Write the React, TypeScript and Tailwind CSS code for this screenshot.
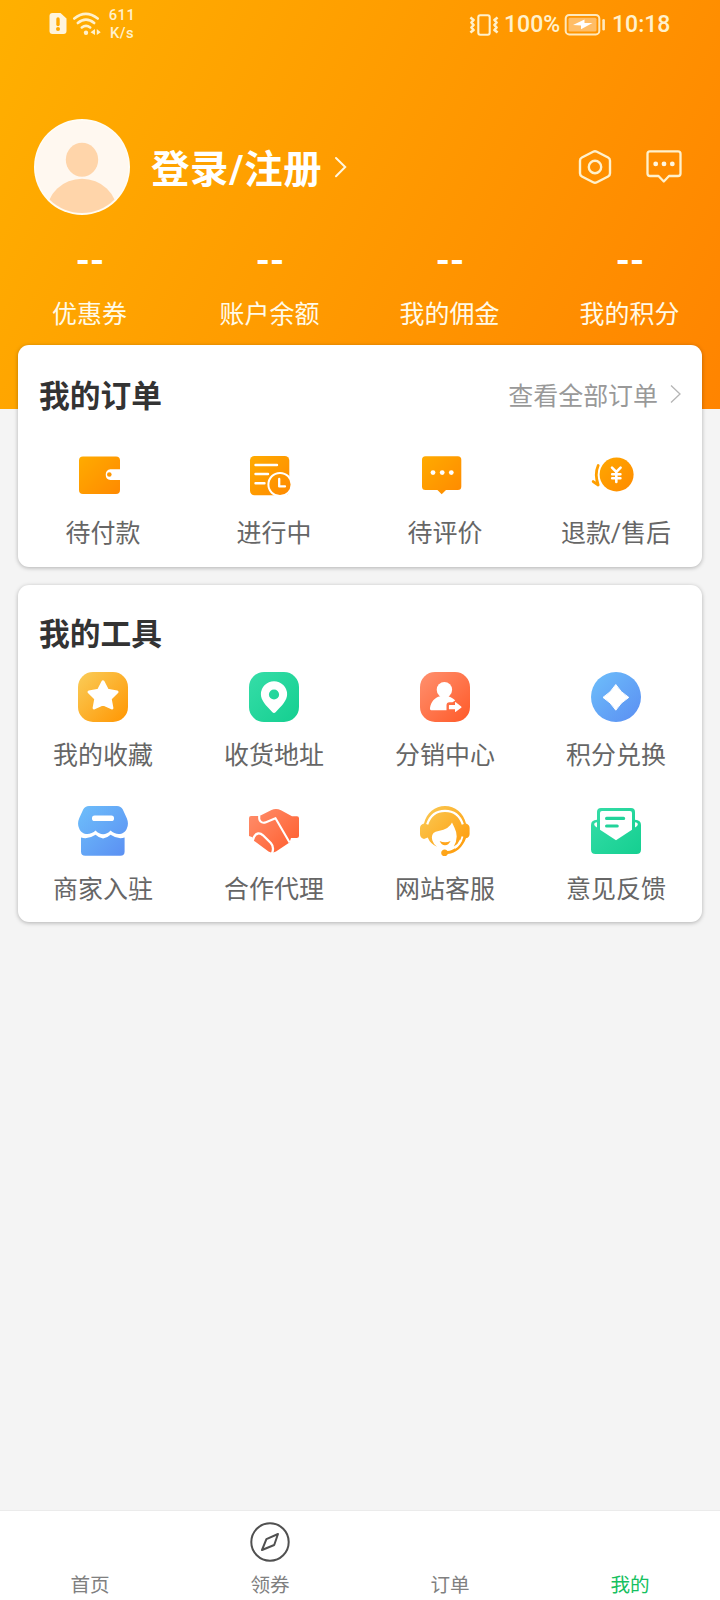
import type { ReactNode } from "react";

type Item = { label: string; icon: ReactNode };

const Grad = ({ id, from, to }: { id: string; from: string; to: string }) => (
  <linearGradient id={id} gradientUnits="userSpaceOnUse" x1="4" y1="4" x2="46" y2="46">
    <stop offset="0" stopColor={from} />
    <stop offset="1" stopColor={to} />
  </linearGradient>
);

const Icon = ({ children }: { children: ReactNode }) => (
  <svg className="ml-[60px] block h-[50px] w-[50px]" viewBox="0 0 50 50">
    {children}
  </svg>
);

const orders: Item[] = [
  {
    label: "待付款",
    icon: (
      <Icon>
        <path
          fill="url(#orange)"
          d="M5 6.5H38Q42 6.5 42 10.5V19.3H32.4A5.4 5.4 0 0 0 32.4 30H42V40Q42 44 38 44H5Q1 44 1 40V10.5Q1 6.5 5 6.5Z"
        />
        <circle cx="31.3" cy="24.5" r="2.3" fill="url(#orange)" />
      </Icon>
    ),
  },
  {
    label: "进行中",
    icon: (
      <Icon>
        <rect x="1" y="6" width="39.3" height="39.3" rx="4.5" fill="url(#orange)" />
        <path d="M6.5 15H28M6.5 24H19M6.5 33.2H15.5" stroke="#fff" strokeWidth="2.4" strokeLinecap="round" />
        <circle cx="31" cy="34.5" r="11.6" fill="url(#orange)" stroke="#fff" strokeWidth="2" />
        <path d="M30.2 29V36.4H36" fill="none" stroke="#fff" strokeWidth="2.3" strokeLinecap="round" strokeLinejoin="round" />
      </Icon>
    ),
  },
  {
    label: "待评价",
    icon: (
      <Icon>
        <path
          fill="url(#orange)"
          d="M5.5 6.3H37.8Q41.3 6.3 41.3 9.8V36.5Q41.3 40 37.8 40H26L21.7 44.3L17.4 40H5.5Q2 40 2 36.5V9.8Q2 6.3 5.5 6.3Z"
        />
        <g fill="#fff">
          <circle cx="13" cy="22.6" r="2.4" />
          <circle cx="22.2" cy="22.6" r="2.4" />
          <circle cx="31.3" cy="22.6" r="2.4" />
        </g>
      </Icon>
    ),
  },
  {
    label: "退款/售后",
    icon: (
      <Icon>
        <circle cx="25.6" cy="24.4" r="17" fill="url(#orange)" />
        <path d="M7.2 15.5Q3.4 24 7.2 35L2.2 31.6" fill="none" stroke="#ff9f00" strokeWidth="2.8" strokeLinecap="round" strokeLinejoin="round" />
        <path d="M21 17.6L25.3 22L29.6 17.6M25.3 22V32M21.2 24.2H29.4M21.2 28.3H29.4" fill="none" stroke="#fff" strokeWidth="2.6" strokeLinecap="round" />
      </Icon>
    ),
  },
];

const tools: Item[] = [
  {
    label: "我的收藏",
    icon: (
      <Icon>
        <rect width="50" height="50" rx="15" fill="url(#amber)" />
        <path
          fill="#fff"
          stroke="#fff"
          strokeWidth="3"
          strokeLinejoin="round"
          d="M25 9.8L29.4 18.2L39 20L32.2 26.7L33.9 36L25 32L16.1 36L17.8 26.7L11 20L20.6 18.2Z"
        />
      </Icon>
    ),
  },
  {
    label: "收货地址",
    icon: (
      <Icon>
        <rect width="50" height="50" rx="15" fill="url(#green)" />
        <path
          fill="#fff"
          fillRule="evenodd"
          d="M25 9.2A13.1 13.1 0 0 1 38.1 22.3C38.1 28.5 33 33.5 26.8 40Q25 42 23.2 40C17 33.5 11.9 28.5 11.9 22.3A13.1 13.1 0 0 1 25 9.2ZM25 17.4A5.1 5.1 0 1 0 25 27.6A5.1 5.1 0 1 0 25 17.4Z"
        />
      </Icon>
    ),
  },
  {
    label: "分销中心",
    icon: (
      <Icon>
        <rect width="50" height="50" rx="15" fill="url(#red)" />
        <g fill="#fff">
          <circle cx="24.4" cy="17.8" r="7.7" />
          <path d="M20.5 22H28.5L28.8 24.5C31.4 25.3 33.7 26.7 35.2 28.6L32.5 30.3H29.5Q26.5 30.3 26.5 33.3V38.3H12Q9.6 38.3 10 36C11 30 14.5 25.5 20.2 24.3Z" />
          <path d="M29.5 33H35V30.5Q35 29.8 35.8 30.3L41.2 34.4Q42 35.1 41.2 35.8L35.8 39.8Q35 40.3 35 39.5V37.3H29.5Q28.9 37.3 28.9 36.7V33.6Q28.9 33 29.5 33Z" />
        </g>
      </Icon>
    ),
  },
  {
    label: "积分兑换",
    icon: (
      <Icon>
        <circle cx="25" cy="25" r="25" fill="url(#blue)" />
        <path fill="#fff" stroke="#fff" strokeLinejoin="round" d="M24.8 12.5Q29.5 20.5 37.8 25.4Q29.5 30.3 24.8 38.2Q20 30.3 12 25.4Q20 20.5 24.8 12.5Z" />
      </Icon>
    ),
  },
  {
    label: "商家入驻",
    icon: (
      <Icon>
        <path
          fill="url(#blue)"
          d="M11 0H39Q43 0 44.8 3.5L48.8 12.2Q51 17.5 49 22C46.5 29.5 37.5 29.5 32.6 24.5C28 29.6 22.2 29.6 17.6 24.5C12.5 29.5 3.5 29.5 1 22Q-1 17.5 1.2 12.2L5.2 3.5Q7 0 11 0Z"
        />
        <path
          fill="url(#blue)"
          d="M3 31.6Q10.5 33.6 17.6 28.8Q25 36 32.6 28.8Q39.5 33.6 46.6 31.6V45.5Q46.6 49.8 42.3 49.8H7.3Q3 49.8 3 45.5Z"
        />
        <rect x="14" y="9.4" width="22" height="5.6" rx="2.6" fill="#fff" />
      </Icon>
    ),
  },
  {
    label: "合作代理",
    icon: (
      <Icon>
        <path
          fill="url(#red)"
          d="M2 10H10.5L22.5 4Q27 1.8 32 4.2L43 10.2H48Q50 10.2 50 12.2V29.5Q50 32 47.5 32H42L40.5 36.5L27 45.6Q23 47.7 19.5 45.5L4.5 34.5L3.5 31.2L0 30V12Q0 10 2 10Z"
        />
        <path
          d="M10.3 9.5C9.3 15 12.5 18 17 16.2L26.5 12.2L40.6 36.5"
          fill="none"
          stroke="#fff"
          strokeWidth="2.1"
          strokeLinejoin="round"
        />
        <path d="M3.5 35.5L5 31C7 26.6 11 26.6 14 29.3L21.8 37Q25.5 41 23 47.5" fill="none" stroke="#fff" strokeWidth="2.3" />
      </Icon>
    ),
  },
  {
    label: "网站客服",
    icon: (
      <Icon>
        <path
          fill="url(#amber)"
          d="M4 17.5C6.5 6.8 15 0 25 0S43.5 6.8 46 17.5Q49.6 18.5 49.6 22V28Q49.6 31.5 46 32.3C42.8 41 36 47.6 27.8 47.9A3.4 3.4 0 1 1 27.5 45.1C33.5 44.3 38.3 40.8 41.5 35L40 33.5Q38.2 38.2 33.8 40.6Q39.2 31 34.5 21.8L32 16.5Q29.4 23 18.5 25Q10 26.3 12.4 34.5Q13.3 38 17 40.7Q10.5 38.3 7.7 31.6L4 33Q0 32 0 28V22Q0 18.5 4 17.5Z"
        />
        <path d="M7.2 18.3C10 9.8 16.5 4.8 25 4.8S40 9.8 42.8 18.3" fill="none" stroke="#fff" strokeWidth="2.2" />
        <path d="M42.5 30.5Q40.5 38.5 34.8 42" fill="none" stroke="#fff" strokeWidth="1.8" />
        <path d="M19.6 35Q25 37.6 30.6 35Q28.5 39.2 25 39.2Q21.5 39.2 19.6 35Z" fill="#ffa51a" />
      </Icon>
    ),
  },
  {
    label: "意见反馈",
    icon: (
      <Icon>
        <path
          fill="url(#green)"
          d="M10 2H40Q44 2 44 6V13.8Q50 14.3 50 19V43.5Q50 48 45.5 48H4.5Q0 48 0 43.5V19Q0 14.3 6 13.8V6Q6 2 10 2Z"
        />
        <path fill="#fff" d="M11 5H39Q41 5 41 7V23.8L25 34.2L9 23.8V7Q9 5 11 5Z" />
        <path d="M6 16.3Q3.2 16.5 3.2 18.6Q3.2 20 6 21.4ZM44 16.3Q46.8 16.5 46.8 18.6Q46.8 20 44 21.4Z" fill="#fff" />
        <path d="M15.6 12.4H32.6M15.6 20H26.2" stroke="#22d39a" strokeWidth="3.2" strokeLinecap="round" />
      </Icon>
    ),
  },
];

const Cell = ({ item }: { item: Item }) => (
  <div className="flex w-[171px] flex-col">
    {item.icon}
    <div className="mt-4 h-[33px] pr-px text-center text-[24.96px] leading-9 text-[#666]">{item.label}</div>
  </div>
);

const StatusBar = () => (
  <div className="flex h-[50px] items-center text-[#fff1cc]">
    <svg className="ml-[49px] block h-[30px] w-[56px] shrink-0" viewBox="49 10 56 30">
      <path fill="#fff4dc" d="M52.5 13H60.5L66.5 18.6V31Q66.5 34 63.5 34H52.5Q49.5 34 49.5 31V16Q49.5 13 52.5 13Z" />
      <path d="M58 19V24.5" stroke="#ffa800" strokeWidth="3.4" strokeLinecap="round" />
      <circle cx="58" cy="29" r="2" fill="#ffa800" />
      <g fill="none" stroke="#fff1cc" strokeWidth="2.6" strokeLinecap="round">
        <path d="M74.3 18.5Q85.8 9.3 97.7 18.5" />
        <path d="M77.8 23Q86 16.2 94.2 23" />
        <path d="M81.8 27.5Q86 24.3 90.2 27.5" />
      </g>
      <circle cx="86" cy="32.7" r="2.2" fill="#fff1cc" />
      <path fill="#fff1cc" d="M95 29V35L90.5 32.2ZM96.8 29V35L100.7 32.2Z" />
    </svg>
    <div className="-mt-[2px] ml-[3px] w-[28px] text-center text-[14.8px] font-medium leading-[18px] tracking-[0.5px]">
      <div>611</div>
      <div>K/s</div>
    </div>
    <svg className="ml-[333px] block h-[26px] w-[30px] shrink-0" viewBox="469 11 30 26">
      <g fill="none" stroke="#fff1cc" strokeWidth="2.1" strokeLinejoin="round">
        <rect x="478.3" y="14.2" width="11.4" height="19.6" rx="2" />
        <path strokeWidth="2.6" d="M470.4 16.5L473.6 19L471.4 21.5L473.6 24L471.4 26.5L473.6 29L470.4 31.5" />
        <path strokeWidth="2.6" d="M497.6 16.5L494.4 19L496.6 21.5L494.4 24L496.6 26.5L494.4 29L497.6 31.5" />
      </g>
    </svg>
    <div className="ml-[5px] w-[60px] whitespace-nowrap text-[23px] font-medium leading-[50px]">100%</div>
    <svg className="block h-[24px] w-[42px] shrink-0" viewBox="564 13 42 24">
      <rect x="565.7" y="15" width="33.6" height="19.4" rx="3.5" fill="none" stroke="#ffe9bd" strokeWidth="2" />
      <rect x="568.5" y="17.8" width="28" height="13.8" rx="1.5" fill="#ffbd66" />
      <path d="M573 25L584.5 19.5V23H592.5L581 29.2V25.6Z" fill="#fff" />
      <path d="M603.6 20.2V29.2" stroke="#ffe9bd" strokeWidth="2.6" strokeLinecap="round" />
    </svg>
    <div className="ml-[6px] whitespace-nowrap text-[23px] font-medium leading-[50px]">10:18</div>
  </div>
);

const stats = ["优惠券", "账户余额", "我的佣金", "我的积分"];

export default function App() {
  return (
    <div className="flex h-[1600px] w-[720px] flex-col overflow-hidden bg-[#f4f4f4] font-[Roboto,'Noto_Sans_CJK_SC',sans-serif]">
      <svg className="absolute h-0 w-0">
        <defs>
          <Grad id="orange" from="#ffab00" to="#ff8700" />
          <Grad id="amber" from="#fac852" to="#ff9a08" />
          <Grad id="green" from="#33dca6" to="#17d092" />
          <Grad id="red" from="#ff8c69" to="#ff5e2e" />
          <Grad id="blue" from="#6cbbfa" to="#5c92f3" />
        </defs>
      </svg>

      <header className="h-[409px] shrink-0 bg-[linear-gradient(119deg,#ffb000_0%,#ff8400_100%)]">
        <StatusBar />
        <div className="mt-[69px] flex h-24 items-center pl-[34px] text-white">
          <svg className="block h-24 w-24" viewBox="0 0 96 96">
            <clipPath id="face">
              <circle cx="48" cy="48" r="46" />
            </clipPath>
            <circle cx="48" cy="48" r="48" fill="#fffdf5" />
            <circle cx="48" cy="48" r="46.5" fill="#fff8f0" />
            <g clipPath="url(#face)" fill="#ffd5aa">
              <ellipse cx="48" cy="40.7" rx="16.2" ry="17" />
              <ellipse cx="48" cy="93" rx="35" ry="33.2" />
            </g>
          </svg>
          <div className="ml-[21px] w-[183px] whitespace-nowrap pt-[5px] text-[38.4px] font-bold leading-[48px] tracking-[0.7px]">
            登录/注册
          </div>
          <svg className="block h-6 w-4" viewBox="0 0 16 24">
            <path d="M2 3L11.2 12L2 21.3" fill="none" stroke="#fff7e0" strokeWidth="2" strokeLinecap="round" />
          </svg>
          <svg className="ml-[227px] mt-[-1px] block h-9 w-9" viewBox="577.5 148.5 36 36" fill="none" stroke="#fff1cc" strokeWidth="2.4">
            <path
              strokeLinejoin="round"
              d="M593.6 151.2Q595.5 150.2 597.4 151.2L608.6 157Q610.5 158 610.5 160.2V172.8Q610.5 175 608.6 176L597.4 181.8Q595.5 182.8 593.6 181.8L582.4 176Q580.5 175 580.5 172.8V160.2Q580.5 158 582.4 157Z"
            />
            <circle cx="595.5" cy="166.5" r="6.2" />
          </svg>
          <svg className="ml-[32px] mt-[-1px] block h-9 w-[38px]" viewBox="645.5 148.5 38 36">
            <path
              fill="none"
              stroke="#fff1cc"
              strokeWidth="2.3"
              strokeLinejoin="round"
              d="M650.5 150.8H678.5Q681 150.8 681 153.3V173Q681 175.5 678.5 175.5H669.5L664.3 181L659 175.5H650.5Q648 175.5 648 173V153.3Q648 150.8 650.5 150.8Z"
            />
            <g fill="#fff7e0">
              <circle cx="656.2" cy="163.4" r="2.4" />
              <circle cx="664.5" cy="163.4" r="2.4" />
              <circle cx="672.8" cy="163.4" r="2.4" />
            </g>
          </svg>
        </div>
        <div className="mt-[21px] grid grid-cols-4 text-center text-white">
          {stats.map((s) => (
            <div key={s}>
              <div className="h-[61px] text-[36px] font-bold leading-[50px]">--</div>
              <div className="h-9 pr-px text-[24.96px] leading-9 text-[#fffae8]">{s}</div>
            </div>
          ))}
        </div>
      </header>

      <main className="-mt-16 flex flex-1 flex-col gap-[18px] px-[18px]">
        <section className="relative h-[222px] shrink-0 rounded-[11px] bg-white shadow-[0_1px_4px_rgba(0,0,0,0.28)]">
          <div className="flex h-[105px] items-center pl-[21px] pr-[20px]">
            <h2 className="mt-[-2px] flex-1 text-[30.72px] font-bold leading-10 text-[#333]">我的订单</h2>
            <span className="mt-[-2px] text-[24.96px] leading-9 text-[#999]">查看全部订单</span>
            <svg className="-mt-[8px] ml-[11px] block h-5 w-[13px]" viewBox="0 0 13 20">
              <path d="M2 1.5L11 10L2 18.5" fill="none" stroke="#b5b5b5" strokeWidth="1.3" />
            </svg>
          </div>
          <div className="flex">
            {orders.map((o) => (
              <Cell key={o.label} item={o} />
            ))}
          </div>
        </section>

        <section className="h-[337px] shrink-0 rounded-[11px] bg-white shadow-[0_1px_4px_rgba(0,0,0,0.28)]">
          <h2 className="h-[87px] pl-[21px] pt-[30px] text-[30.72px] font-bold leading-10 text-[#333]">我的工具</h2>
          <div className="grid grid-cols-4 gap-y-[35px]">
            {tools.map((t) => (
              <Cell key={t.label} item={t} />
            ))}
          </div>
        </section>
      </main>

      <nav className="grid h-[90px] shrink-0 grid-cols-4 border-t border-[#ebebeb] bg-white text-center text-[19.6px] leading-[26px] text-[#808080]">
        <div className="flex flex-col justify-end pb-px">首页</div>
        <div className="flex flex-col items-center justify-end pb-px">
          <svg className="mb-[11px] mr-px block h-10 w-10" viewBox="0 0 40 40" fill="none" stroke="#505050" strokeWidth="2">
            <circle cx="20" cy="20" r="18.7" />
            <path strokeLinejoin="round" d="M28 12L24.2 23L12 28L16.4 17.2Z" />
          </svg>
          领券
        </div>
        <div className="flex flex-col justify-end pb-px">订单</div>
        <div className="flex flex-col justify-end pb-px text-[#15c060]">我的</div>
      </nav>
    </div>
  );
}
